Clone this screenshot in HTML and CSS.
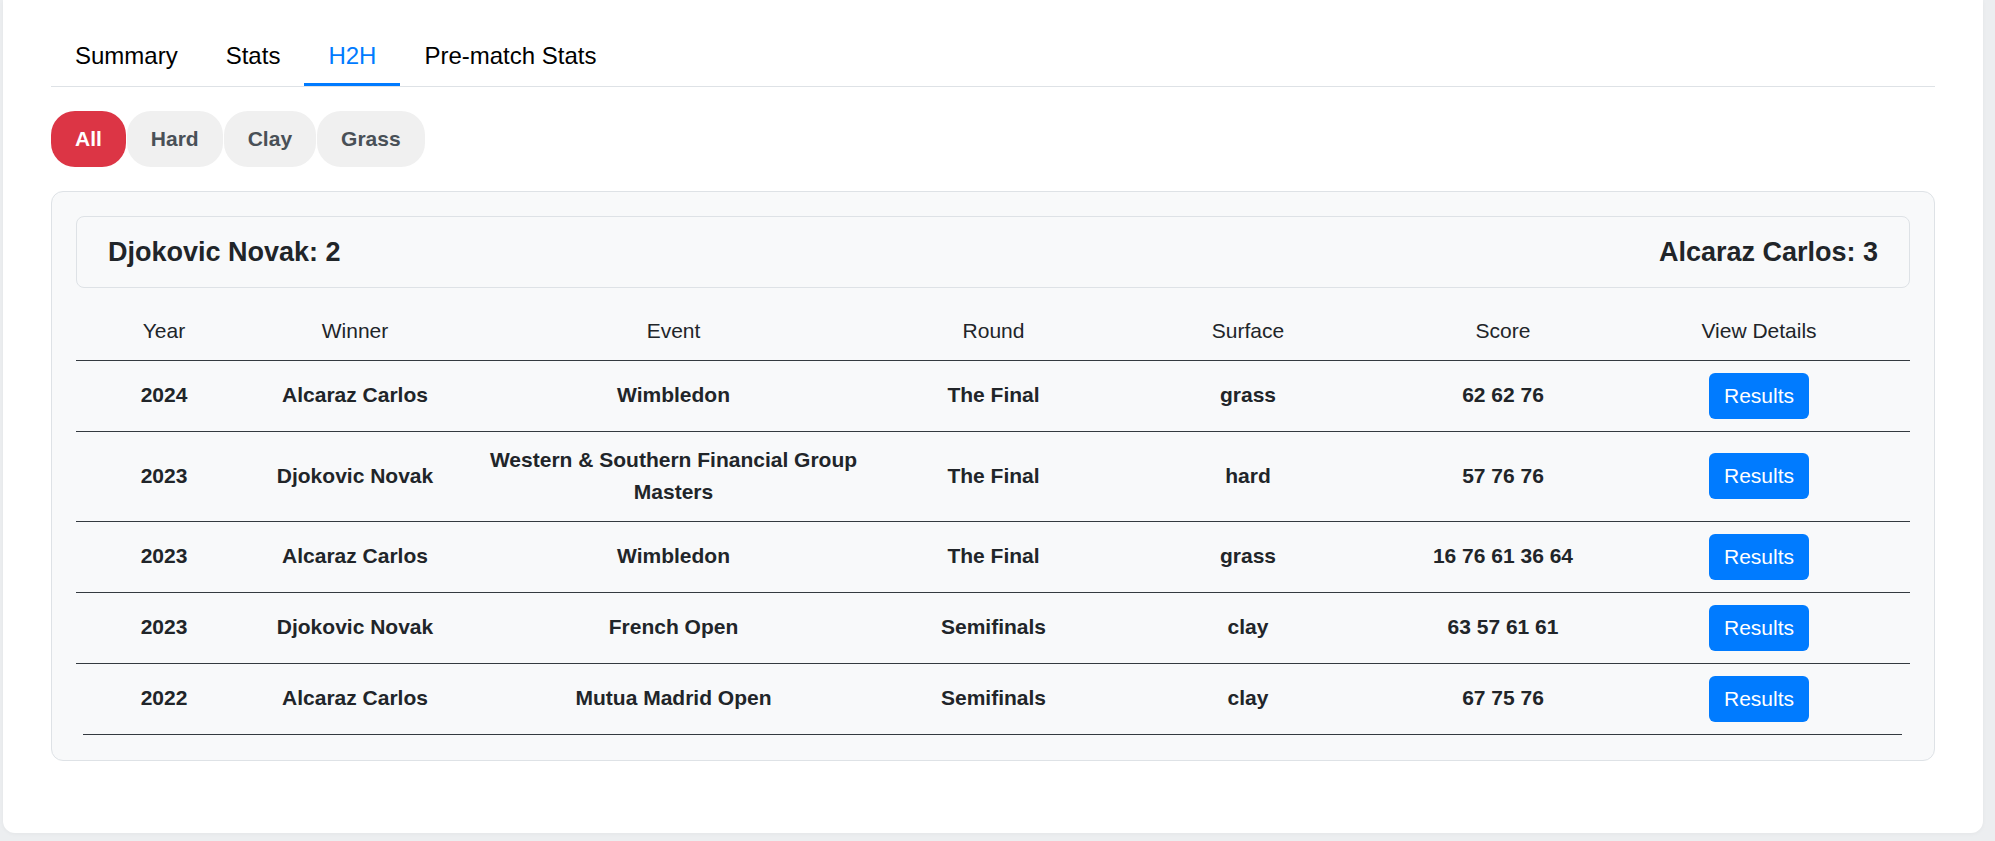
FILE: index.html
```html
<!DOCTYPE html>
<html lang="en">
<head>
<meta charset="utf-8">
<title>H2H</title>
<link rel="stylesheet" href="styles.css">
</head>
<body>
<div class="card">
  <nav class="tabs">
    <a class="tab">Summary</a>
    <a class="tab">Stats</a>
    <a class="tab active">H2H</a>
    <a class="tab">Pre-match Stats</a>
  </nav>
  <div class="pills">
    <button class="pill active">All</button>
    <button class="pill">Hard</button>
    <button class="pill">Clay</button>
    <button class="pill">Grass</button>
  </div>
  <section class="panel">
    <div class="summary">
      <span>Djokovic Novak: 2</span>
      <span>Alcaraz Carlos: 3</span>
    </div>
    <table class="h2h">
      <colgroup>
        <col class="c-year"><col class="c-winner"><col class="c-event"><col class="c-round"><col class="c-surface"><col class="c-score"><col class="c-view">
      </colgroup>
      <thead>
        <tr><th>Year</th><th>Winner</th><th>Event</th><th>Round</th><th>Surface</th><th>Score</th><th>View Details</th></tr>
      </thead>
      <tbody>
        <tr><td>2024</td><td>Alcaraz Carlos</td><td>Wimbledon</td><td>The Final</td><td>grass</td><td>62 62 76</td><td><button class="btn">Results</button></td></tr>
        <tr><td>2023</td><td>Djokovic Novak</td><td>Western &amp; Southern Financial Group Masters</td><td>The Final</td><td>hard</td><td>57 76 76</td><td><button class="btn">Results</button></td></tr>
        <tr><td>2023</td><td>Alcaraz Carlos</td><td>Wimbledon</td><td>The Final</td><td>grass</td><td>16 76 61 36 64</td><td><button class="btn">Results</button></td></tr>
        <tr><td>2023</td><td>Djokovic Novak</td><td>French Open</td><td>Semifinals</td><td>clay</td><td>63 57 61 61</td><td><button class="btn">Results</button></td></tr>
        <tr class="last"><td>2022</td><td>Alcaraz Carlos</td><td>Mutua Madrid Open</td><td>Semifinals</td><td>clay</td><td>67 75 76</td><td><button class="btn">Results</button></td></tr>
      </tbody>
    </table>
    <div class="end-rule"></div>
  </section>
</div>
</body>
</html>
```

FILE: styles.css
```css
* { box-sizing: border-box; }

html, body {
  margin: 0;
  padding: 0;
}

body {
  background: #eceef0;
  font-family: "Liberation Sans", Arial, sans-serif;
  color: #212529;
  height: 841px;
  overflow: hidden;
}

.card {
  background: #ffffff;
  margin: 0 12px 0 3px;
  padding: 30px 48px 72px 48px;
  border-radius: 0 0 12px 12px;
  box-shadow: 0 1px 4px rgba(0, 0, 0, 0.04);
}

.tabs {
  display: flex;
  border-bottom: 1px solid #dee2e6;
}

.tab {
  font-size: 24px;
  line-height: 28px;
  padding: 12px 24px 13px;
  color: #000;
  border-bottom: 3px solid transparent;
  cursor: pointer;
}

.tab.active {
  color: #007bff;
  border-bottom-color: #007bff;
}

.pills {
  display: flex;
  gap: 1px;
  margin-top: 24px;
}

.pill {
  font-family: "Liberation Sans", Arial, sans-serif;
  font-size: 21px;
  font-weight: 700;
  line-height: 32px;
  padding: 12px 24px;
  border: none;
  border-radius: 24px;
  background: #f0f0f0;
  color: #495057;
}

.pill.active {
  background: #dc3545;
  color: #ffffff;
}

.panel {
  margin-top: 24px;
  background: #f8f9fa;
  border: 1px solid #dee2e6;
  border-radius: 12px;
  padding: 24px 24px 25px 24px;
}

.summary {
  display: flex;
  justify-content: space-between;
  align-items: center;
  height: 72px;
  padding: 0 31px;
  border: 1px solid #dee2e6;
  border-radius: 8px;
  background: #f8f9fa;
  font-size: 27px;
  font-weight: 700;
  color: #212529;
}

.h2h {
  width: 100%;
  margin-top: 15px;
  border-collapse: collapse;
  table-layout: fixed;
  font-size: 21px;
}

.c-year { width: 176px; }
.c-winner { width: 206px; }
.c-event { width: 431px; }
.c-round { width: 209px; }
.c-surface { width: 300px; }
.c-score { width: 210px; }
.c-view { width: 302px; }

.h2h th,
.h2h td {
  text-align: center;
  vertical-align: middle;
  padding: 12px;
  line-height: 32.5px;
  color: #212529;
}

.h2h th {
  font-weight: 400;
  border-bottom: 1px solid #343a40;
}

.h2h td {
  font-weight: 700;
  border-bottom: 1px solid #343a40;
}

.h2h tr.last td {
  border-bottom: none;
}

.btn {
  font-family: "Liberation Sans", Arial, sans-serif;
  font-size: 21px;
  line-height: 32px;
  height: 46px;
  padding: 0 15px;
  border: none;
  border-radius: 6px;
  background: #007bff;
  color: #ffffff;
  vertical-align: middle;
}

.end-rule {
  height: 1px;
  margin: 0 8px 0 7px;
  background: #343a40;
}
```
